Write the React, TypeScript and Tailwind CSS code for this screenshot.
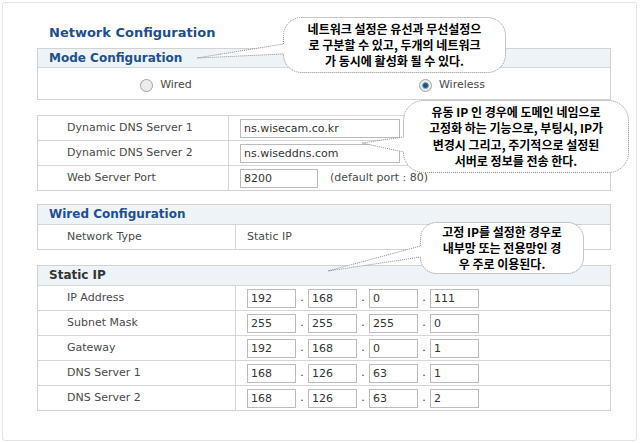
import React from "react";

type Bubble = {
  x: number;
  y: number;
  w: number;
  h: number;
  r: number;
  a: number;
  b: number;
  tx: number;
  ty: number;
};

function bubblePath({ x, y, w, h, r, a, b, tx, ty }: Bubble) {
  return `M${x + r},${y} H${x + w - r} A${r},${r} 0 0 1 ${x + w},${y + r} V${y + h - r} A${r},${r} 0 0 1 ${x + w - r},${y + h} H${x + r} A${r},${r} 0 0 1 ${x},${y + h - r} V${b} L${tx},${ty} L${x},${a} V${y + r} A${r},${r} 0 0 1 ${x + r},${y} Z`;
}

const bubbles: Bubble[] = [
  { x: 283.5, y: 17.5, w: 222, h: 55, r: 18, a: 44, b: 54, tx: 197, ty: 58 },
  { x: 403.5, y: 100.5, w: 225, h: 72, r: 20, a: 137, b: 152, tx: 362, ty: 143 },
  { x: 420.5, y: 222.5, w: 163, h: 51, r: 16, a: 246, b: 257, tx: 328, ty: 271 },
];

function Field({ value, w }: { value: string; w: string }) {
  return (
    <div className={`${w} h-[19px] border border-[#bcbcbc] bg-white px-[3px] text-[11px] leading-[17px] text-[#333]`}>
      {value}
    </div>
  );
}

function IpRow({ label, parts }: { label: string; parts: string[] }) {
  return (
    <div className="flex h-[25px] border-t border-[#d6d6d6]">
      <div className="w-[198px] border-r border-[#d6d6d6] pl-[29px] flex items-center text-[#4a4a4a]">{label}</div>
      <div className="flex items-center pl-[11px]">
        {parts.map((p, i) => (
          <React.Fragment key={i}>
            {i > 0 && <span className="w-[12px] text-center text-[#333]">.</span>}
            <Field value={p} w="w-[49px]" />
          </React.Fragment>
        ))}
      </div>
    </div>
  );
}

function Radio({ checked, label }: { checked?: boolean; label: string }) {
  return (
    <div className="flex items-center gap-[7px]">
      <div className="w-[13px] h-[13px] rounded-full border border-[#a3a3a3] bg-[#ececec] flex items-center justify-center">
        {checked && <div className="w-[7px] h-[7px] rounded-full bg-[#24506f] border border-[#7fb0cf]" />}
      </div>
      <span className="text-[#4a4a4a]">{label}</span>
    </div>
  );
}

export default function App() {
  return (
    <div className="relative w-[640px] h-[443px] bg-white p-[2px] overflow-hidden font-['DejaVu_Sans',sans-serif] text-[11px]">
      <div className="w-[635px] h-[439px] border border-[#e4e4e4] rounded-[3px] pl-[34px] pt-[20px]">
        <div className="h-[20px] leading-[20px] pl-[12px] mb-[5px] text-[13px] font-bold text-[#1f4f8e]">
          Network Configuration
        </div>

        <div className="w-[574px] border border-[#d2d2d2]">
          <div className="h-[19px] border-b border-[#d6d6d6] bg-[#edf3f7] pl-[11px] leading-[19px] font-bold text-[12px] text-[#1f4f8e]">
            Mode Configuration
          </div>
          <div className="flex h-[31px] pt-[4px]">
            <div className="w-1/2 pr-[30px] flex items-center justify-center">
              <Radio label="Wired" />
            </div>
            <div className="w-1/2 pr-[30px] flex items-center justify-center">
              <Radio checked label="Wireless" />
            </div>
          </div>
        </div>

        <div className="w-[574px] mt-[15px] border border-t-0 border-[#d2d2d2]">
          {[
            ["Dynamic DNS Server 1", "ns.wisecam.co.kr"],
            ["Dynamic DNS Server 2", "ns.wiseddns.com"],
          ].map(([l, v]) => (
            <div key={l} className="flex h-[25px] border-t border-[#d6d6d6]">
              <div className="w-[191px] border-r border-[#d6d6d6] pl-[29px] flex items-center text-[#4a4a4a]">{l}</div>
              <div className="flex items-center pl-[11px]">
                <Field value={v} w="w-[160px]" />
              </div>
            </div>
          ))}
          <div className="flex h-[25px] border-t border-[#d6d6d6]">
            <div className="w-[191px] border-r border-[#d6d6d6] pl-[29px] flex items-center text-[#4a4a4a]">Web Server Port</div>
            <div className="flex items-center pl-[11px] gap-[12px]">
              <Field value="8200" w="w-[78px]" />
              <span className="text-[#4a4a4a]">(default port : 80)</span>
            </div>
          </div>
        </div>

        <div className="w-[574px] mt-[13px] border border-[#d2d2d2]">
          <div className="h-[19px] bg-[#edf3f7] pl-[11px] leading-[19px] font-bold text-[12px] text-[#1f4f8e]">
            Wired Configuration
          </div>
          <div className="flex h-[25px] border-t border-[#d6d6d6]">
            <div className="w-[198px] border-r border-[#d6d6d6] pl-[29px] flex items-center text-[#4a4a4a]">Network Type</div>
            <div className="flex items-center pl-[11px] text-[#4a4a4a]">Static IP</div>
          </div>
        </div>

        <div className="w-[574px] mt-[15px] border border-[#d2d2d2]">
          <div className="h-[19px] bg-[#edf3f7] pl-[11px] leading-[19px] font-bold text-[12px] text-[#333]">
            Static IP
          </div>
          <IpRow label="IP Address" parts={["192", "168", "0", "111"]} />
          <IpRow label="Subnet Mask" parts={["255", "255", "255", "0"]} />
          <IpRow label="Gateway" parts={["192", "168", "0", "1"]} />
          <IpRow label="DNS Server 1" parts={["168", "126", "63", "1"]} />
          <IpRow label="DNS Server 2" parts={["168", "126", "63", "2"]} />
        </div>
      </div>

      <svg className="absolute left-0 top-0 pointer-events-none" width="640" height="443">
        {bubbles.map((b, i) => (
          <path key={i} d={bubblePath(b)} fill="white" stroke="#8c8c8c" strokeWidth="1" strokeDasharray="1 1" />
        ))}
      </svg>

      <div className="absolute left-[284px] top-[18px] w-[221px] h-[54px] flex items-center justify-center text-center font-['Noto_Sans_CJK_KR',sans-serif] font-bold text-[12px] leading-[16px] text-black">
        네트워크 설정은 유선과 무선설정으
        <br />
        로 구분할 수 있고, 두개의 네트워크
        <br />
        가 동시에 활성화 될 수 있다.
      </div>
      <div className="absolute left-[404px] top-[101px] w-[224px] h-[71px] flex items-center justify-center text-center font-['Noto_Sans_CJK_KR',sans-serif] font-bold text-[12px] leading-[16.5px] text-black">
        유동 IP 인 경우에 도메인 네임으로
        <br />
        고정화 하는 기능으로, 부팅시, IP가
        <br />
        변경시 그리고, 주기적으로 설정된
        <br />
        서버로 정보를 전송 한다.
      </div>
      <div className="absolute left-[421px] top-[223px] w-[162px] h-[50px] flex items-center justify-center text-center font-['Noto_Sans_CJK_KR',sans-serif] font-bold text-[12px] leading-[16px] text-black">
        고정 IP를 설정한 경우로
        <br />
        내부망 또는 전용망인 경
        <br />
        우 주로 이용된다.
      </div>
    </div>
  );
}
